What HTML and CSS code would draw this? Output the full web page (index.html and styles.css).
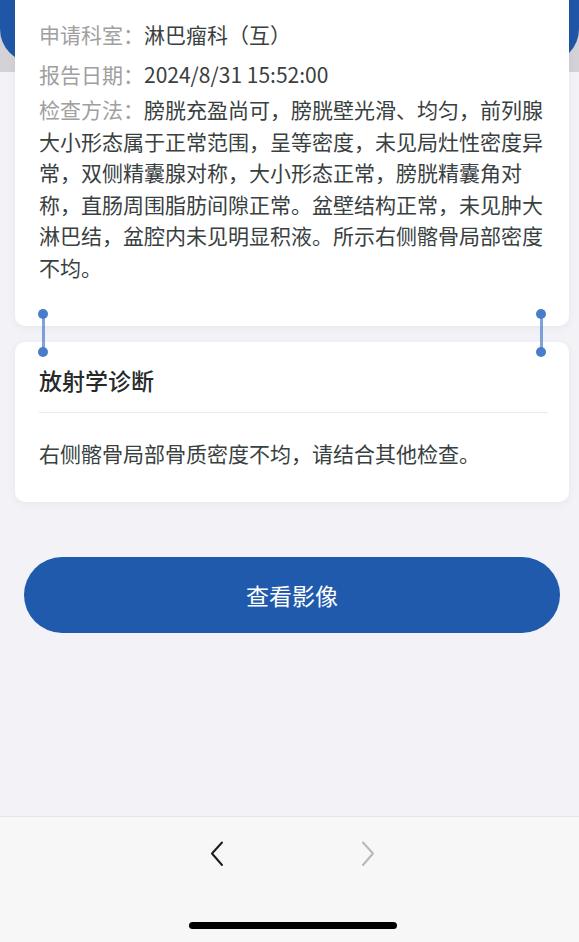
FILE: index.html
```html
<!DOCTYPE html>
<html lang="zh-CN">
<head>
    <meta charset="UTF-8">
    <meta name="viewport" content="width=device-width, initial-scale=1.0">
    <title>检查报告</title>
    <link rel="stylesheet" href="styles.css">
</head>
<body>
    <div class="page">
        <div class="top-bg">
            <div class="top-band"></div>
        </div>

        <main class="content">
            <div class="cards">
                <section class="card card-info">
                    <div class="info-row">
                        <span class="label">申请科室：</span><span class="value">淋巴瘤科（互）</span>
                    </div>
                    <div class="info-row">
                        <span class="label">报告日期：</span><span class="value">2024/8/31 15:52:00</span>
                    </div>
                    <p class="info-desc"><span class="label">检查方法：</span>膀胱充盈尚可，膀胱壁光滑、均匀，前列腺大小形态属于正常范围，呈等密度，未见局灶性密度异常，双侧精囊腺对称，大小形态正常，膀胱精囊角对称，直肠周围脂肪间隙正常。盆壁结构正常，未见肿大淋巴结，盆腔内未见明显积液。所示右侧髂骨局部密度不均。</p>
                </section>

                <section class="card card-diag">
                    <h2 class="card-title">放射学诊断</h2>
                    <p class="diag-text">右侧髂骨局部骨质密度不均，请结合其他检查。</p>
                </section>

                <!-- text selection handles -->
                <span class="handle handle-left"></span>
                <span class="handle handle-right"></span>
            </div>

            <button class="btn-primary" type="button">查看影像</button>
        </main>

        <nav class="bottom-bar">
            <div class="nav-arrows">
                <svg class="arrow" width="14" height="26" viewBox="0 0 14 26">
                    <polyline points="12,1.5 2,12.5 12,24" fill="none" stroke="#1c1c1e" stroke-width="2" stroke-linecap="round" stroke-linejoin="round"/>
                </svg>
                <svg class="arrow" width="14" height="26" viewBox="0 0 14 26">
                    <polyline points="2,1.5 12,12.5 2,24" fill="none" stroke="#b8b8bc" stroke-width="2" stroke-linecap="round" stroke-linejoin="round"/>
                </svg>
            </div>
            <div class="home-indicator"></div>
        </nav>
    </div>
</body>
</html>
```

FILE: styles.css
```css
body {
    margin: 0;
    padding: 0;
    background-color: #f2f2f7;
    font-family: "Noto Sans CJK SC", "Noto Sans", sans-serif;
    color: #333;
}

.page {
    min-height: 100vh;
    display: flex;
    flex-direction: column;
    overflow: hidden;
}

.top-bg {
    height: 72px;
    background: #d3d3d7;
}

.top-band {
    height: 63px;
    background: #1f56a6;
    border-radius: 0 0 34px 34px;
}

.content {
    flex: 1;
}

.cards {
    position: relative;
    margin-top: -72px;
}

.card {
    background: #fff;
    border-radius: 10px;
    box-shadow: 0px 2px 10px rgba(0, 0, 0, 0.05);
    margin: 0 10px 0 15px;
}

.card-info {
    padding: 19px 20px 43px 24px;
    border-radius: 0 0 10px 10px;
    font-size: 21px;
}

.info-row {
    line-height: 31.5px;
    margin-bottom: 8.5px;
}

.info-row + .info-row {
    margin-bottom: 3.5px;
}

.label {
    color: #a0a0a0;
}

.value {
    color: #394040;
}

.info-desc {
    margin: 0;
    line-height: 31.5px;
    color: #394040;
}

.card-diag {
    margin-top: 16px;
    padding: 0 21px 33px 24px;
}

.card-title {
    margin: 0;
    padding: 22px 0 16px;
    font-size: 23px;
    line-height: 32px;
    font-weight: 500;
    color: #262a2a;
    border-bottom: 1px solid #e9e9ec;
}

.diag-text {
    margin: 24px 0 0;
    font-size: 21px;
    line-height: 32px;
    color: #394040;
}

.handle {
    position: absolute;
    top: 309px;
    width: 10px;
    height: 48px;
}

.handle::before {
    content: "";
    position: absolute;
    left: 3.5px;
    top: 5px;
    width: 3px;
    height: 38px;
    background: rgba(74, 124, 204, 0.7);
}

.handle::after {
    content: "";
    position: absolute;
    left: 0;
    top: 0;
    width: 10px;
    height: 10px;
    border-radius: 50%;
    background: #4a7ccc;
    box-shadow: 0 38px 0 #4a7ccc;
}

.handle-left {
    left: 38px;
}

.handle-right {
    left: 536px;
}

.btn-primary {
    display: block;
    width: 536px;
    height: 76px;
    margin: 55px 0 0 24px;
    border: none;
    border-radius: 38px;
    background-color: #1f5aad;
    color: #fff;
    font-family: inherit;
    font-size: 23px;
    cursor: pointer;
}

.bottom-bar {
    background: #f7f7f7;
    border-top: 1px solid #e4e4e7;
    padding: 24px 0 13px;
}

.nav-arrows {
    display: flex;
    justify-content: center;
    gap: 137px;
    padding-left: 6px;
}

.arrow {
    display: block;
}

.home-indicator {
    width: 208px;
    height: 7px;
    margin: 55px 0 0 189px;
    background: #000;
    border-radius: 4px;
}
```
